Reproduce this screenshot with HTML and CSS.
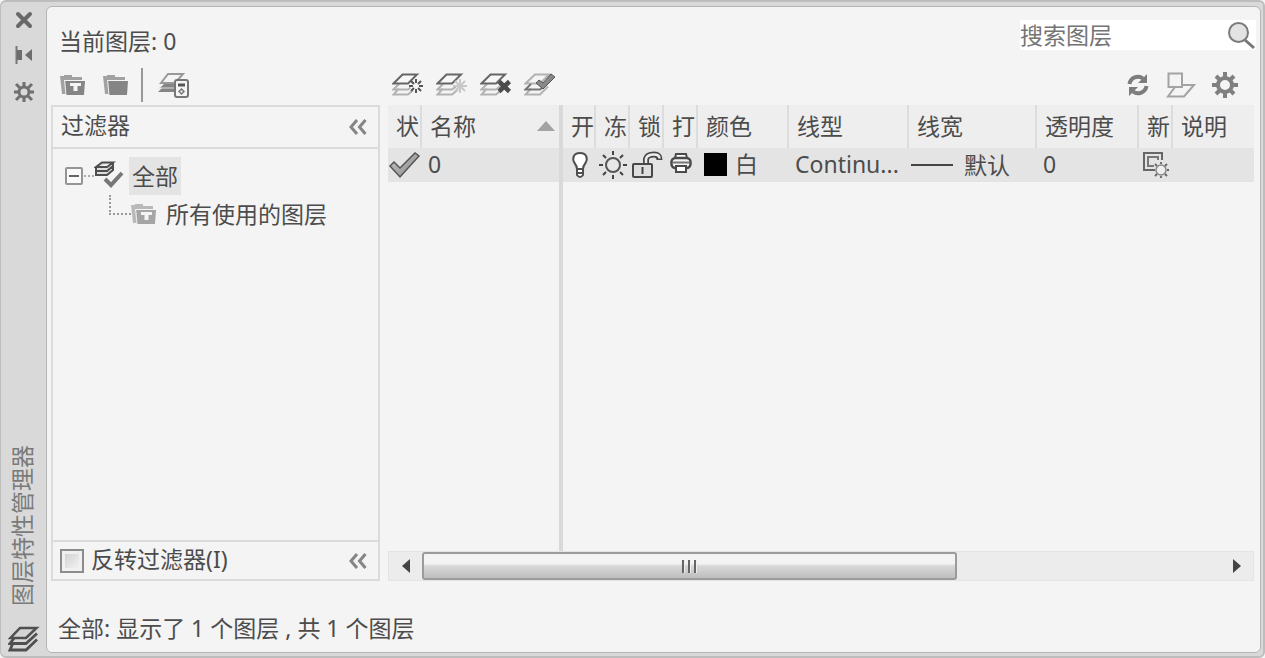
FILE: index.html
```html
<!DOCTYPE html>
<html lang="zh-CN">
<head>
<meta charset="utf-8">
<title>图层特性管理器</title>
<link rel="stylesheet" href="styles.css">
</head>
<body>
<svg class="defs" aria-hidden="true">
  <defs>
    <linearGradient id="sheen" x1="0" y1="0" x2="1" y2="1"><stop offset="0" stop-color="#c4c4c4"/><stop offset="1" stop-color="#8b8b8b"/></linearGradient>
    <symbol id="layers" viewBox="0 0 32 26">
      <path d="M7 16.500 1.500 22.500H16l6-5M7 12 1.500 17.500H16l5-4" fill="none" stroke="#b2b2b2" stroke-width="2"/>
      <path d="M10.500 2.500H25L16 11.500H1.500Z" fill="#f7f7f7" stroke="#666" stroke-width="2"/>
    </symbol>
    <symbol id="folder" viewBox="0 0 26 22">
      <path d="M0 2H4V1H12V3H22V6H5L6 20H2Z" fill="currentColor" opacity=".75"/>
      <path d="M5 7H25L24 21H6Z" fill="currentColor"/>
      <path d="M4.500 6 6 21" stroke="#eee"/>
    </symbol>
    <symbol id="chevrons" viewBox="0 0 20 18">
      <path d="M9 2 3 9 9 16M17.500 2 11.500 9l6 7" fill="none" stroke="#858585" stroke-width="3"/>
    </symbol>
  </defs>
</svg>
<div class="window">
  <aside class="rail">
    <button class="tool" aria-label="关闭"><svg width="20" height="18" viewBox="0 0 20 18"><path d="M4 3 16 15M16 3 4 15" stroke="#686868" stroke-width="4" stroke-linecap="round"/></svg></button>
    <button class="tool" aria-label="自动隐藏"><svg width="20" height="20" viewBox="0 0 20 20"><path d="M2.500 1V19" stroke="#777" stroke-width="2"/><path d="M3 5H8V15H3ZM18 4V16L11 10Z" fill="#6d6d6d"/></svg></button>
    <button class="tool" aria-label="特性"><svg width="22" height="22" viewBox="0 0 22 22"><circle cx="11" cy="11" r="5" fill="none" stroke="#707070" stroke-width="3"/><path d="M11 1v5M11 16v5M1 11h5M16 11h5M3 3l4 4M15 15l4 4M19 3l-4 4M7 15l-4 4" stroke="#707070" stroke-width="3"/></svg></button>
    <h1 class="rail-title">图层特性管理器</h1>
    <svg width="32" height="28" viewBox="0 0 32 28"><path d="M5 18 2 25H18L29 14.500M7 12 2 18.500H18L29 8.500" fill="none" stroke="#505050" stroke-width="2.800"/><path d="M12 3H28.500L18 13H2.500Z" fill="#d4d4d4" stroke="#505050" stroke-width="2.500"/></svg>
  </aside>
  <main class="panel">
    <header class="top">
      <p class="current">当前图层: 0</p>
      <div class="search">
        <input type="search" placeholder="搜索图层" aria-label="搜索图层">
        <svg width="30" height="30" viewBox="0 0 30 30"><path d="M19 20 28 28" stroke="#777" stroke-width="3"/><circle cx="12.500" cy="12.500" r="9.500" fill="#e3e3e3" stroke="#7b7b7b" stroke-width="2"/></svg>
      </div>
    </header>
    <div class="columns toolbars">
      <div class="bar filter-tools">
        <button class="tool" aria-label="新建特性过滤器"><svg class="gray" width="26" height="22" viewBox="0 0 26 22"><use href="#folder"/><path d="M10 9H21V12H17.500V17H13.500V12H10Z" fill="#f4f4f4"/></svg></button>
        <button class="tool" aria-label="新建组过滤器"><svg class="gray" width="26" height="22"><use href="#folder"/></svg></button>
        <span class="sep"></span>
        <button class="tool" aria-label="图层状态管理器"><svg width="32" height="28" viewBox="0 0 32 28"><path d="M10 3H25L17 12H3Z" fill="#f4f4f4" stroke="#999" stroke-width="2"/><path d="M6 13H18V21H0L4 17H2Z" fill="#858585"/><path d="M1 17H17" stroke="#ddd"/><rect x="17" y="9" width="13" height="17" rx="2" fill="#f5f5f5" stroke="#777" stroke-width="2"/><path d="M20 14H27" stroke="#555" stroke-width="3"/><path d="M23.500 17 27 20.500 23.500 24 20 20.500Z" fill="#777"/><path d="M22.500 20.500h2" stroke="#f5f5f5" stroke-width="2"/></svg></button>
      </div>
      <div class="bar layer-tools">
        <button class="tool" aria-label="新建图层"><svg width="32" height="26" viewBox="0 0 32 26"><use href="#layers"/><circle cx="24" cy="14" r="6" fill="#f4f4f4"/><path d="M24 7v4M24 17v4M17 14h4M27 14h4M19 9l3 3M26 16l3 3M29 9l-3 3M22 16l-3 3" stroke="#555" stroke-width="2"/></svg></button>
        <button class="tool" aria-label="新建冻结图层"><svg width="32" height="26" viewBox="0 0 32 26"><use href="#layers"/><path d="M24 7v14M17 14h14M19 9l10 10M29 9 19 19" stroke="#c8c8c8" stroke-width="2"/></svg></button>
        <button class="tool" aria-label="删除图层"><svg width="32" height="26" viewBox="0 0 32 26"><use href="#layers"/><path d="M19 9.500 29.500 19.500M29.500 9.500 19 19.500" stroke="#4c4c4c" stroke-width="4.500"/></svg></button>
        <button class="tool" aria-label="置为当前"><svg width="32" height="26" viewBox="0 0 32 26"><path d="M7 16.500 1.500 22.500H16l8-8M11 2.500H25L16 11.500H1.500Z" fill="none" stroke="#b2b2b2" stroke-width="2"/><path d="M7 12 1.500 17.500H16l5-4" fill="none" stroke="#777" stroke-width="2"/><path d="M12 11 15 8 19 11 27 2 31 5 19 17Z" fill="#888" stroke="#555"/></svg></button>
        <span class="grow"></span>
        <button class="tool" aria-label="刷新"><svg width="24" height="24" viewBox="0 0 24 24"><path d="M3.500 11A8.500 8.500 0 0 1 17 5.500M20.500 13A8.500 8.500 0 0 1 7 18.500" fill="none" stroke="#7d7d7d" stroke-width="4"/><path d="M21 1V10H12ZM3 23V14H12Z" fill="#7d7d7d"/></svg></button>
        <button class="tool" aria-label="切换替代亮显"><svg width="30" height="26" viewBox="0 0 30 26"><path d="M17 13H28L18 24.500H2L9 15" fill="none" stroke="#a3a3a3" stroke-width="2"/><path d="M2.500 1.500H16V15H2.500Z" fill="#f4f4f4" stroke="#a3a3a3" stroke-width="2"/></svg></button>
        <button class="tool" aria-label="设置"><svg width="26" height="26" viewBox="0 0 26 26"><circle cx="13" cy="13" r="7" fill="none" stroke="#808080" stroke-width="4"/><path d="M13 0v6M13 20v6M0 13h6M20 13h6M4 4l4 4M18 18l4 4M22 4l-4 4M8 18l-4 4" stroke="#808080" stroke-width="4"/></svg></button>
      </div>
    </div>
    <div class="columns body">
      <section class="filters">
        <div class="filter-head"><h2>过滤器</h2><button class="tool" aria-label="收拢过滤器"><svg width="20" height="18"><use href="#chevrons"/></svg></button></div>
        <ul class="tree">
          <li class="root">
            <button class="tool" aria-label="折叠"><svg width="18" height="18" viewBox="0 0 18 18"><rect x="1" y="1" width="16" height="16" rx="1" fill="#fafafa" stroke="#949494" stroke-width="2"/><path d="M4 9H14" stroke="#666" stroke-width="2"/></svg></button>
            <span class="dots"></span>
            <svg width="30" height="30" viewBox="0 0 30 30"><path d="M8 1.500H19L13 6H2ZM2 6V14H13L19 9V1.500M2 10H13L19 5" fill="#ddd" stroke="#4e4e4e" stroke-width="2"/><path d="M11 18 17 24 28 12" fill="none" stroke="#777" stroke-width="4"/></svg>
            <span class="node selected">全部</span>
          </li>
          <li class="child">
            <span class="elbow"></span>
            <svg class="light" width="26" height="22" viewBox="0 0 26 22"><use href="#folder"/><path d="M10 9H21V12H17.500V17H13.500V12H10Z" fill="#f4f4f4"/></svg>
            <span class="node">所有使用的图层</span>
          </li>
        </ul>
        <div class="filter-foot"><label><input type="checkbox"><span>反转过滤器(I)</span></label><button class="tool" aria-label="收拢"><svg width="20" height="18"><use href="#chevrons"/></svg></button></div>
      </section>
      <section class="layers">
        <table>
          <colgroup><col class="w-status"><col class="w-name"><col class="w-on"><col class="w-flag"><col class="w-flag"><col class="w-flag"><col class="w-color"><col class="w-type"><col class="w-weight"><col class="w-alpha"><col class="w-flag"><col></colgroup>
          <thead><tr>
            <th>状</th>
            <th><div class="sorted">名称<svg width="18" height="10" viewBox="0 0 18 10"><path d="M9 0 18 10H0Z" fill="#a3a3a3"/></svg></div></th>
            <th class="split">开</th><th>冻</th><th>锁</th><th>打</th><th>颜色</th><th>线型</th><th>线宽</th><th>透明度</th><th>新</th><th>说明</th>
          </tr></thead>
          <tbody>
            <tr class="layer">
              <td><svg width="32" height="28" viewBox="0 0 32 28"><path d="M2 15 6 11 12 17 27 2 31 5 12 26Z" fill="url(#sheen)" stroke="#555" stroke-width="1.500"/></svg></td>
              <td class="text">0</td>
              <td class="split icon"><svg width="18" height="28" viewBox="0 0 18 28"><path d="M6 18Q6 15 3.500 12C1 8 2 2 9 2S17 8 14.500 12Q12 15 12 18V24Q9 28 6 24Z" fill="#fff" stroke="#4f4f4f" stroke-width="2"/><path d="M6 18h6M6 22h6" stroke="#4f4f4f" stroke-width="2"/></svg></td>
              <td class="icon"><svg width="28" height="28" viewBox="0 0 28 28"><circle cx="14" cy="14" r="7" fill="#e8e8e8" stroke="#555" stroke-width="2"/><path d="M14 0v4M14 24v4M0 14h4M24 14h4M4 4l3 3M21 21l3 3M24 4l-3 3M7 21l-3 3" stroke="#444" stroke-width="2"/></svg></td>
              <td class="icon"><svg width="32" height="28" viewBox="0 0 32 28"><path d="M15 13V8Q16 3.500 23 3.500 28.500 3.500 28.500 9" fill="none" stroke="#484848" stroke-width="6"/><path d="M15 13V8Q16 3.500 23 3.500 28.500 3.500 28.500 7.500" fill="none" stroke="#eee" stroke-width="2.500"/><rect x="2" y="13" width="19" height="13" rx="1" fill="#dedede" stroke="#484848" stroke-width="2"/><path d="M11.500 16V23" stroke="#444" stroke-width="2"/></svg></td>
              <td class="icon raised"><svg width="24" height="24" viewBox="0 0 24 24"><path d="M6 7 7 3H17L18 7" fill="#fff" stroke="#4a4a4a" stroke-width="2"/><rect x="2.500" y="7" width="19" height="10" rx="4" fill="#f4f4f4" stroke="#4a4a4a" stroke-width="2.500"/><path d="M3 11.500H21" stroke="#777" stroke-width="2"/><path d="M7 15H17L17 21H7Z" fill="#fff" stroke="#4a4a4a" stroke-width="2"/></svg></td>
              <td class="text"><div class="value"><span class="swatch"></span>白</div></td>
              <td class="text">Continu...</td>
              <td><div class="value weight"><span class="line"></span>默认</div></td>
              <td class="text">0</td>
              <td class="icon"><svg width="28" height="28" viewBox="0 0 28 28"><path d="M20 9V2H2V19H11" fill="none" stroke="#666" stroke-width="2"/><path d="M16 9V6H6V15H12" fill="none" stroke="#777" stroke-width="2"/><circle cx="19" cy="19" r="5" fill="#eee" stroke="#888" stroke-width="1.500"/><path d="M19 11v2M19 25v2M11 19h2M25 19h2M13 13l2 2M23 23l2 2M25 13l-2 2M15 23l-2 2" stroke="#666" stroke-width="1.800"/></svg></td>
              <td></td>
            </tr>
            <tr class="filler"><td colspan="2"></td><td class="split" colspan="10"></td></tr>
          </tbody>
        </table>
        <div class="scrollbar">
          <button class="tool arrow" aria-label="向左滚动"><svg width="8" height="14" viewBox="0 0 8 14"><path d="M8 0V14L0 7Z" fill="#444"/></svg></button>
          <div class="track"><div class="thumb"><span></span><span></span><span></span></div></div>
          <button class="tool arrow" aria-label="向右滚动"><svg width="8" height="14" viewBox="0 0 8 14"><path d="M0 0V14L8 7Z" fill="#444"/></svg></button>
        </div>
      </section>
    </div>
    <footer class="status">全部: 显示了 1 个图层 , 共 1 个图层</footer>
  </main>
</div>
</body>
</html>
```

FILE: styles.css
```css
* { box-sizing: border-box; }

body {
  margin: 0;
  height: 100vh;
  background: #f4f4f4;
  color: #4c4c4c;
  font: 23px/30px "Noto Sans", "Noto Sans CJK SC", sans-serif;
}

h1, h2, p, ul { margin: 0; padding: 0; font: inherit; }
svg { display: block; flex: none; }
.defs { position: absolute; width: 0; height: 0; }
.tool { display: block; flex: none; padding: 0; border: 0; background: none; }

.window {
  display: flex;
  height: 100%;
  padding: 4px 2px 3px 0;
  border: 2px solid #bdbdbd;
  border-left-width: 1px;
  border-radius: 6px;
  background: #d9d9d9;
}

.rail {
  display: flex;
  flex-direction: column;
  align-items: center;
  flex: none;
  gap: 16px;
  width: 45px;
  padding-top: 5px;
}
.rail-title {
  margin-top: auto;
  padding-top: 3px;
  writing-mode: vertical-rl;
  text-orientation: sideways;
  transform: rotate(180deg);
  line-height: 34px;
  padding-left: 4px;
  color: #7a7a7a;
}

.panel {
  display: flex;
  flex-direction: column;
  flex: 1;
  min-width: 0;
  border: 1px solid #b5b5b5;
  border-radius: 6px;
  background: #f4f4f4;
}
.top {
  display: flex;
  justify-content: space-between;
  align-items: flex-end;
  height: 50px;
  padding: 0 4px 0 12px;
}
.current { padding-bottom: 1px; }
.search {
  display: flex;
  align-self: flex-start;
  width: 236px;
  height: 30px;
  margin-top: 13px;
  background: #fff;
}
.search input {
  flex: 1;
  min-width: 0;
  padding: 0;
  border: 0;
  outline: 0;
  background: none;
  color: #484848;
  font: inherit;
}
.search input::placeholder { color: #747474; opacity: 1; }

.columns {
  display: grid;
  grid-template-columns: 329px minmax(0, 1fr);
  gap: 8px;
  padding: 0 6px 0 4px;
}
.toolbars { height: 48px; padding-top: 7px; }
.bar { display: flex; align-items: center; }
.filter-tools { gap: 17px; padding-left: 9px; }
.sep { width: 2px; height: 34px; margin: 0 -2px 0 -5px; background: #999; }
.layer-tools { gap: 12px; padding: 0 16px 0 4px; }
.layer-tools .tool:nth-last-child(-n+2) { margin-left: 4px; }
.grow { flex: 1; }
.gray { color: #858585; }
.light { color: #a5a5a5; }

.body { flex: 1; min-height: 0; }
.filters {
  display: flex;
  flex-direction: column;
  border: 2px solid #dbdbdb;
}
.filter-head, .filter-foot {
  display: flex;
  align-items: center;
  justify-content: space-between;
  height: 42px;
  padding: 0 10px 0 8px;
}
.filter-head { border-bottom: 2px solid #dbdbdb; }
.filter-head h2, .filter-foot span { padding-bottom: 4px; }
.filter-foot { height: 39px; padding-left: 7px; border-top: 2px solid #dbdbdb; }
.filter-foot label { display: flex; align-items: center; gap: 7px; }
.filter-foot input {
  appearance: none;
  width: 24px;
  height: 24px;
  margin: 0;
  border: 2px solid #8c8c8c;
  background: linear-gradient(135deg, #ccc, #f8f8f8);
  box-shadow: inset 0 0 0 3px #f0f0f0;
}

.tree { flex: 1; list-style: none; padding: 8px 0 0 12px; }
.tree li { display: flex; align-items: center; height: 38px; }
.dots { width: 10px; margin: 0 0 0 1px; border-top: 2px dotted #aaa; }
.node { padding: 4px 3px; }
.root .node { margin-left: 5px; }
.selected { background: #e4e4e4; }
.child { padding-left: 44px; }
.elbow {
  align-self: flex-start;
  width: 22px;
  height: 20px;
  border: dotted #999;
  border-width: 0 0 2px 2px;
}
.child .node { margin-left: 6px; }

.layers { display: flex; flex-direction: column; min-width: 0; }
table {
  flex: 1;
  width: 100%;
  height: 100%;
  table-layout: fixed;
  border-spacing: 0;
}
.w-status { width: 34px; }
.w-name { width: 137px; }
.w-on { width: 37px; }
.w-flag { width: 34px; }
.w-color { width: 91px; }
.w-type { width: 120px; }
.w-weight { width: 128px; }
.w-alpha { width: 102px; }
th {
  height: 43px;
  padding: 0 0 2px 8px;
  overflow: hidden;
  border-right: 2px solid #dcdcdc;
  background: #eee;
  font-weight: normal;
  text-align: left;
  white-space: nowrap;
}
th:nth-child(2), th:last-child { border-right: 0; }
.sorted { display: flex; align-items: center; justify-content: space-between; padding-right: 4px; }
td { padding: 0; white-space: nowrap; }
.layer { height: 34px; }
.layer td { height: 34px; background: #e4e4e4; }
.text { padding: 0 0 2px 6px; }
.icon svg { margin: 0 auto; }
.raised { padding-bottom: 4px; }
.split { border-left: 4px solid #d9d9d9; }
.value { display: flex; align-items: center; gap: 8px; }
.weight { gap: 11px; padding-left: 2px; }
.swatch { width: 23px; height: 23px; background: #000; }
.line { width: 42px; height: 2px; background: #444; }

.scrollbar {
  display: flex;
  flex: none;
  height: 30px;
  border: 1px solid #e4e4e4;
  background: #ececec;
}
.arrow { display: grid; place-items: center; width: 33px; }
.track { flex: 1; }
.thumb {
  display: flex;
  align-items: center;
  justify-content: center;
  gap: 3px;
  width: 67%;
  height: 28px;
  border: 2px solid #9b9b9b;
  border-radius: 3px;
  background: linear-gradient(#f3f3f3 0 40%, #d8d8d8 50%, #bebebe);
}
.thumb span { width: 3px; height: 13px; background: linear-gradient(90deg, #666 66%, #eee 66%); }

.status { height: 71px; padding: 32px 11px 0; }
```
